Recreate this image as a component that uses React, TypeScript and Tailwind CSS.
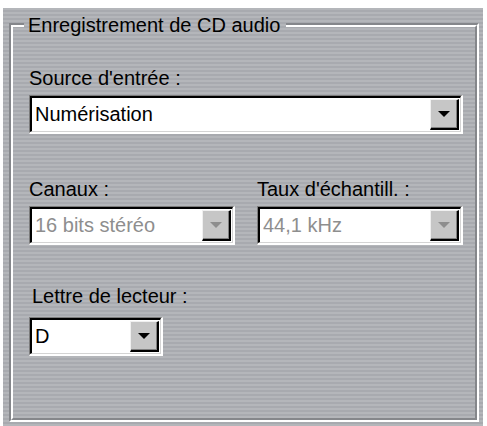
const stripes =
  'bg-[repeating-linear-gradient(to_bottom,#b4b6ba_0px,#b4b6ba_2px,#a8aaaf_2px,#a8aaaf_4px)] bg-fixed';

type ComboProps = {
  value: string;
  disabled?: boolean;
  width: string;
};

const Combo = ({ value, disabled, width }: ComboProps) => (
  <div
    className={`${width} h-[39px] border-t border-l border-[#7c7c7c] border-b-2 border-r-2 border-b-white border-r-white`}
  >
    <div className="h-full flex items-center bg-white border-t-2 border-l-2 border-black border-b border-r border-b-[#d4d4d4] border-r-[#d4d4d4]">
      <span
        className={`flex-1 pl-[3px] text-[20px] leading-[23px] truncate ${
          disabled ? 'text-[#8e8e8e]' : 'text-black'
        }`}
      >
        {value}
      </span>
      <div className="w-[29px] h-[31px] mr-[1px] flex items-center justify-center bg-[#c6c6c6] border-t border-l border-[#f0f0f0] border-b-2 border-r-2 border-b-black border-r-black shadow-[inset_-1px_-1px_0_#808080]">
        <div
          className={`w-0 h-0 border-l-[6px] border-r-[6px] border-t-[6px] border-l-transparent border-r-transparent ${
            disabled ? 'border-t-[#8e8e8e]' : 'border-t-black'
          }`}
        />
      </div>
    </div>
  </div>
);

const Label = ({ children, className = '' }: { children: string; className?: string }) => (
  <div className={`text-[20px] leading-[23px] text-black whitespace-nowrap ${className}`}>{children}</div>
);

export default function App() {
  return (
    <div className="w-[487px] h-[426px] bg-white overflow-hidden font-['Liberation_Sans',Arial,sans-serif]">
      <div className={`ml-[3px] mt-[8px] w-[480px] h-[418px] pl-[6px] pt-[15px] ${stripes}`}>
        {/* Group box with etched border */}
        <div className="relative w-[470px] h-[399px] border-t-2 border-l-2 border-[#85878b] border-b-2 border-r-2 border-b-white border-r-white">
          <div className="h-full border-t-2 border-l-2 border-white border-b-2 border-r-2 border-b-[#85878b] border-r-[#85878b] pl-[16px] pr-[12px] pt-[40px]">
            <Label>Source d'entrée :</Label>
            <div className="mt-[5px]">
              <Combo value="Numérisation" width="w-[434px]" />
            </div>

            <div className="mt-[44px] flex gap-[22px]">
              <div>
                <Label>Canaux :</Label>
                <div className="mt-[5px]">
                  <Combo value="16 bits stéréo" disabled width="w-[206px]" />
                </div>
              </div>
              <div>
                <Label>Taux d'échantill. :</Label>
                <div className="mt-[5px]">
                  <Combo value="44,1 kHz" disabled width="w-[206px]" />
                </div>
              </div>
            </div>

            <Label className="mt-[40px] pl-[3px]">Lettre de lecteur :</Label>
            <div className="mt-[9px]">
              <Combo value="D" width="w-[134px]" />
            </div>
          </div>

          {/* Legend sits over the top border */}
          <div
            className={`absolute left-[13px] top-[-11px] pl-[4px] pr-[6px] text-[20px] leading-[23px] text-black whitespace-nowrap ${stripes}`}
          >
            Enregistrement de CD audio
          </div>
        </div>
      </div>
    </div>
  );
}
